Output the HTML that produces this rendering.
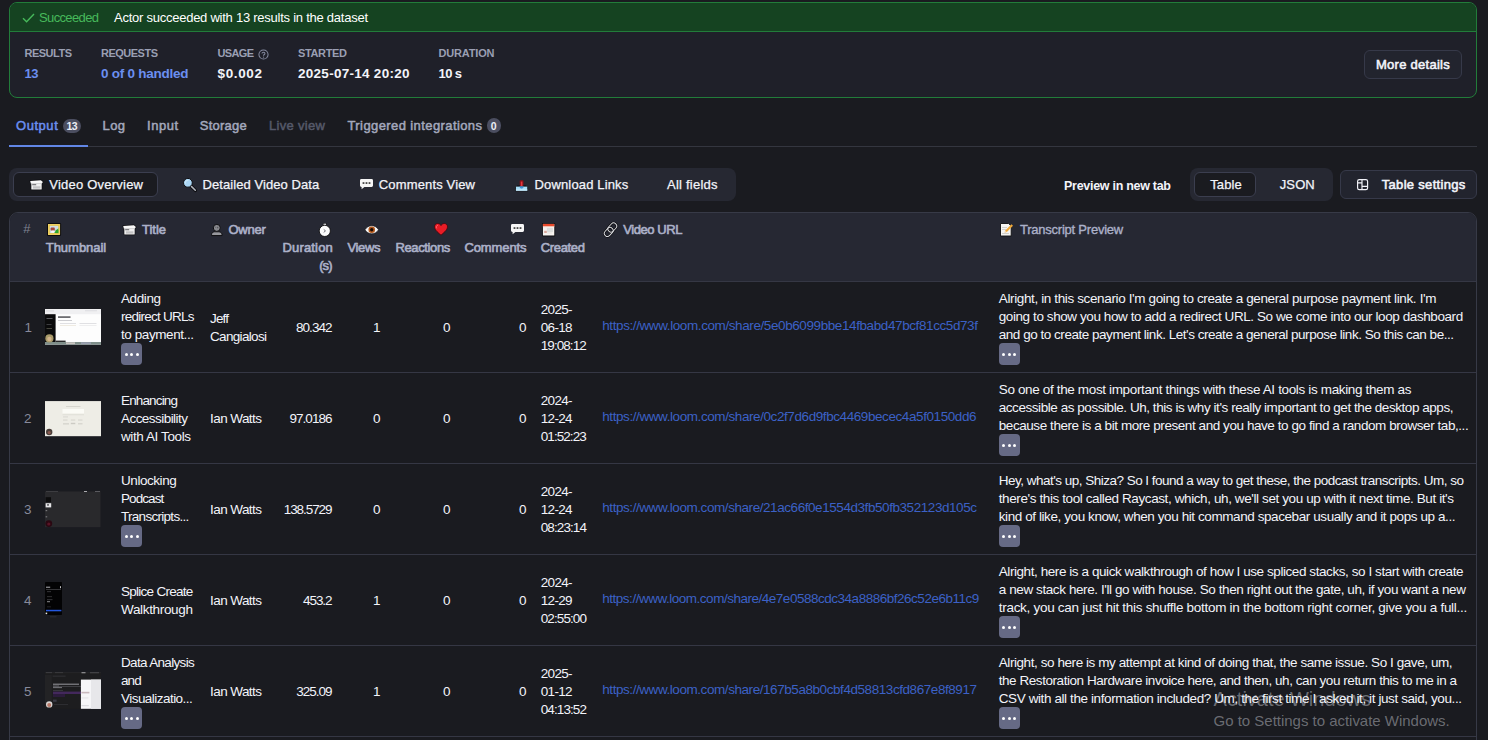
<!DOCTYPE html>
<html lang="en">
<head>
<meta charset="utf-8">
<title>Run output</title>
<style>
*{box-sizing:border-box;margin:0;padding:0}
html,body{width:1488px;height:740px;overflow:hidden;background:#1a1b20;color:#f3f4fa;font-family:"Liberation Sans","DejaVu Sans",sans-serif;font-size:13px}
.t{position:absolute;white-space:nowrap;line-height:normal;z-index:3}
.a{position:absolute}
svg{position:absolute;overflow:visible;z-index:3}
#status{left:9px;top:2px;width:1468px;height:96px;border:1px solid #227c3a;border-radius:8px;background:#1f2029;overflow:hidden}
#status .bar{left:0;top:0;right:0;height:29px;background:#154321;border-bottom:1px solid #227c3a}
.btn{border:1px solid #363949;border-radius:6px;background:#22242e}
.sel{border:1px solid #3b3e4f;border-radius:6px;background:#1a1b20}
.seg{border-radius:8px;background:#262832}
.badge{border-radius:8px;background:#4b4e60}
#table{left:9px;top:212px;width:1468px;height:540px;border:1px solid #373a47;border-radius:9px 9px 0 0;background:#1a1b20;overflow:hidden}
#thead{left:0;top:0;right:0;height:69px;background:#262833;border-bottom:1px solid #353744}
.sep{left:0;right:0;height:1px;background:#353744}
.more{width:21px;height:22px;border-radius:4px;background:#666a85;z-index:3}
.more i{position:absolute;top:9.5px;width:3px;height:3px;border-radius:50%;background:#fff}
.more i:nth-child(1){left:3.5px}.more i:nth-child(2){left:9px}.more i:nth-child(3){left:14.5px}
.thumb{overflow:hidden;z-index:3}
</style>
</head>
<body>
<div class="a" id="status"><div class="a bar"></div></div>
<svg style="left:22px;top:13px" width="13" height="10" viewBox="0 0 13 10"><path d="M1 5.2 L4.6 8.7 L12 1" fill="none" stroke="#47b95b" stroke-width="1.4"/></svg>
<svg style="left:258.2px;top:48.6px" width="11" height="11" viewBox="0 0 12 12"><circle cx="6" cy="6" r="5" fill="none" stroke="#858aa0" stroke-width="1.1"/><path d="M4.4 4.8 C4.4 3.2 7.6 3.2 7.6 4.9 C7.6 6 6 6 6 7.3" fill="none" stroke="#858aa0" stroke-width="1.1"/><circle cx="6" cy="8.8" r=".7" fill="#858aa0"/></svg>
<div class="a btn" style="left:1364px;top:50px;width:98px;height:29px"></div>

<!-- tabs -->
<div class="a badge" style="left:63px;top:119px;width:18px;height:14px"></div>
<div class="a badge" style="left:487px;top:118px;width:14px;height:15px"></div>
<div class="a" style="left:9px;top:145.5px;width:1468px;height:1px;background:#34363f"></div>
<div class="a" style="left:9px;top:144.5px;width:79px;height:2px;background:#6287e6"></div>

<!-- view selector -->
<div class="a seg" style="left:9px;top:168px;width:727px;height:33px"></div>
<div class="a sel" style="left:13px;top:172px;width:145px;height:25px"></div>
<div class="a seg" style="left:1190px;top:168px;width:143px;height:33px"></div>
<div class="a sel" style="left:1194px;top:172px;width:62px;height:25px"></div>
<div class="a btn" style="left:1340px;top:170px;width:137px;height:29px"></div>
<svg style="left:30.3px;top:179.8px" width="13" height="10" viewBox="0 0 13 10"><path d="M0.2 0.9 L10.9 0.2 L12.9 1.9 L11.8 3.7 H0.9 Z" fill="#0d0d10" stroke="#0d0d10" stroke-width="1.3" stroke-linejoin="round"/><rect x="1.3" y="3.4" width="10.4" height="6.1" rx="0.6" fill="#0d0d10" stroke="#0d0d10" stroke-width="1.3"/><path d="M0.2 0.9 L10.9 0.2 L12.9 1.9 L11.8 3.7 H0.9 Z" fill="#f8f8f8"/><rect x="1.3" y="3.4" width="10.4" height="6.1" rx="0.6" fill="#eeeeee"/><rect x="2.2" y="4.3" width="4" height="0.9" fill="#4e4e52"/><rect x="3" y="6.3" width="7.4" height="2.3" fill="#c3c3c5"/></svg>
<svg style="left:182.6px;top:177.5px" width="14" height="14" viewBox="0 0 14 14"><path d="M7.6 7.6 L12.4 12.4" stroke="#0d0d10" stroke-width="3.3" stroke-linecap="round"/><path d="M7.6 7.6 L12.3 12.3" stroke="#b4b8c0" stroke-width="1.5" stroke-linecap="round"/><circle cx="4.9" cy="4.8" r="4.4" fill="#a9d5f4" stroke="#0d0d10" stroke-width="1"/><path d="M2.4 5.6 A2.7 2.7 0 0 1 5.4 2.2" stroke="#d3ecfb" stroke-width="1" fill="none"/></svg>
<svg style="left:359.6px;top:179.2px" width="13" height="10.5" viewBox="0 0 13 10.5"><path d="M1.4 0 H11.6 A1.4 1.4 0 0 1 13 1.4 V6.6 A1.4 1.4 0 0 1 11.6 8 H4.4 L1.6 10.3 V8 H1.4 A1.4 1.4 0 0 1 0 6.6 V1.4 A1.4 1.4 0 0 1 1.4 0 Z" fill="#f6f6f6"/><rect x="2.6" y="3.2" width="1.8" height="1.7" fill="#3a3a3a"/><rect x="5.6" y="3.2" width="1.8" height="1.7" fill="#3a3a3a"/><rect x="8.6" y="3.2" width="1.8" height="1.7" fill="#3a3a3a"/></svg>
<svg style="left:515.2px;top:179.9px" width="13.2" height="11.6" viewBox="0 0 13.2 11.6"><rect x="4.7" y="0.3" width="3.8" height="6.4" rx="0.8" fill="#8c0f18"/><rect x="5.8" y="1.6" width="1.6" height="5" fill="#e23a42"/><path d="M2.4 5.5 H4.9 V6 H8.3 V5.5 H10.8 L13 6.9 V11.3 H0.2 V6.9 Z" fill="#0d0d10"/><rect x="0.9" y="6.6" width="11.4" height="4.1" fill="#a7ddf9"/><rect x="0.9" y="9.4" width="11.4" height="1.3" fill="#c9ecfc"/><path d="M4.5 6.6 H8.7 A2.1 2.1 0 0 1 4.5 6.6 Z" fill="#4696da"/></svg>
<svg style="left:46.7px;top:223px" width="14.1" height="12.9" viewBox="0 0 14.1 12.9"><rect x="0" y="0" width="14.1" height="12.9" rx="1.2" fill="#0d0d10"/><rect x="1" y="1" width="12.1" height="10.9" rx="0.5" fill="#e8c548"/><rect x="1.6" y="1.6" width="10.9" height="9.7" fill="none" stroke="#f3dc7a" stroke-width="0.5"/><rect x="2.8" y="2.8" width="8.5" height="7.3" fill="#cfdde6"/><path d="M11.3 5.2 L11.3 10.1 L7 10.1 Z" fill="#2fa62a"/><rect x="8.6" y="6.8" width="2.7" height="3.3" fill="#2fa62a"/><rect x="3.6" y="4.6" width="4.2" height="3.2" rx="0.8" fill="#a8483a"/><rect x="4.2" y="7.4" width="3.2" height="2.4" rx="0.6" fill="#fafafa"/></svg>
<svg style="left:122.8px;top:224.8px" width="13" height="10" viewBox="0 0 13 10"><path d="M0.2 0.9 L10.9 0.2 L12.9 1.9 L11.8 3.7 H0.9 Z" fill="#0d0d10" stroke="#0d0d10" stroke-width="1.3" stroke-linejoin="round"/><rect x="1.3" y="3.4" width="10.4" height="6.1" rx="0.6" fill="#0d0d10" stroke="#0d0d10" stroke-width="1.3"/><path d="M0.2 0.9 L10.9 0.2 L12.9 1.9 L11.8 3.7 H0.9 Z" fill="#f8f8f8"/><rect x="1.3" y="3.4" width="10.4" height="6.1" rx="0.6" fill="#eeeeee"/><rect x="2.2" y="4.3" width="4" height="0.9" fill="#4e4e52"/><rect x="3" y="6.3" width="7.4" height="2.3" fill="#c3c3c5"/></svg>
<svg style="left:211.4px;top:224px" width="11.6" height="12.2" viewBox="0 0 11.6 12.2"><path d="M0.6 11.6 V10.2 C0.6 8.6 2.4 8 3.6 7.8 H8 C9.2 8 11 8.6 11 10.2 V11.6 Z" fill="#97989d" stroke="#0d0d10" stroke-width="1"/><circle cx="5.8" cy="3.9" r="3.5" fill="#86878c" stroke="#0d0d10" stroke-width="1"/><circle cx="6.6" cy="3.6" r="0.8" fill="#55565c"/><circle cx="4.6" cy="3.3" r="0.6" fill="#6a6b70"/></svg>
<svg style="left:319.1px;top:222.7px" width="11.6" height="13.6" viewBox="0 0 11.6 13.6"><rect x="3.9" y="0" width="3.8" height="3.4" rx="0.7" fill="#0d0d10"/><rect x="4.5" y="0.6" width="2.6" height="2.4" fill="#d9dade"/><circle cx="5.8" cy="7.9" r="5.6" fill="#fbfbfc" stroke="#0d0d10" stroke-width="0.9"/><path d="M4.7 6.4 L6.5 7.9 L4.7 9.4" stroke="#55565e" stroke-width="0.8" fill="none"/></svg>
<svg style="left:364.8px;top:224.8px" width="13.5" height="9.5" viewBox="0 0 13.5 9.5"><path d="M0 4.75 C3 -0.6 10.5 -0.6 13.5 4.75 C10.5 10.1 3 10.1 0 4.75 Z" fill="#f7f7f7" stroke="#0d0d10" stroke-width="0.6"/><circle cx="6.75" cy="4.75" r="3.3" fill="#b4581c"/><circle cx="6.75" cy="4.75" r="1.7" fill="#1a0d06"/></svg>
<svg style="left:434px;top:223.2px" width="14" height="12.6" viewBox="0 0 14 12.6"><path d="M7 12.2 C2.5 8.5 0.5 6.3 0.5 3.8 C0.5 1.7 2 0.5 3.7 0.5 C5.2 0.5 6.4 1.3 7 2.5 C7.6 1.3 8.8 0.5 10.3 0.5 C12 0.5 13.5 1.7 13.5 3.8 C13.5 6.3 11.5 8.5 7 12.2 Z" fill="#e81c26" stroke="#45080e" stroke-width="0.9"/><path d="M3.5 2.3 C2.4 2.7 2 3.8 2.5 5" stroke="#ff6a70" stroke-width="1" fill="none" stroke-linecap="round"/></svg>
<svg style="left:511.3px;top:224.2px" width="13" height="10.5" viewBox="0 0 13 10.5"><path d="M1.4 0 H11.6 A1.4 1.4 0 0 1 13 1.4 V6.6 A1.4 1.4 0 0 1 11.6 8 H4.4 L1.6 10.3 V8 H1.4 A1.4 1.4 0 0 1 0 6.6 V1.4 A1.4 1.4 0 0 1 1.4 0 Z" fill="#f6f6f6"/><rect x="2.6" y="3.2" width="1.8" height="1.7" fill="#3a3a3a"/><rect x="5.6" y="3.2" width="1.8" height="1.7" fill="#3a3a3a"/><rect x="8.6" y="3.2" width="1.8" height="1.7" fill="#3a3a3a"/></svg>
<svg style="left:542.1px;top:223.2px" width="13.2" height="13.4" viewBox="0 0 13.2 13.4"><rect x="0" y="0" width="13.2" height="13.4" rx="0.8" fill="#0d0d10"/><rect x="0.9" y="0.9" width="11.4" height="11.6" fill="#f6f3f0"/><rect x="0.9" y="0.9" width="11.4" height="2.5" fill="#e84a2c"/><rect x="0.9" y="3.4" width="11.4" height="0.7" fill="#f6c8bb"/><rect x="4.9" y="4.9" width="6" height="4.2" fill="#dcdedd"/><rect x="2.2" y="7.8" width="2.6" height="2.2" fill="#d9a79c"/><rect x="5.2" y="9.6" width="4.6" height="0.8" fill="#e2dedb"/></svg>
<svg style="left:604.4px;top:222.9px" width="13" height="13.4" viewBox="0 0 13 13.4"><g fill="none" stroke="#0d0d10" stroke-width="2.4"><rect x="-5" y="-3.1" width="10" height="6.2" rx="3.1" transform="translate(4.75 8.95) rotate(-47)"/><rect x="-5" y="-3.1" width="10" height="6.2" rx="3.1" transform="translate(8.3 4.5) rotate(-47)"/></g><g fill="none" stroke="#dcdde2" stroke-width="0.95"><rect x="-5" y="-3.1" width="10" height="6.2" rx="3.1" transform="translate(4.75 8.95) rotate(-47)"/><rect x="-5" y="-3.1" width="10" height="6.2" rx="3.1" transform="translate(8.3 4.5) rotate(-47)"/></g></svg>
<svg style="left:1000px;top:223px" width="13.5" height="13.5" viewBox="0 0 13.5 13.5"><path d="M0.5 0.5 H8.6 L11.2 3 V13 H0.5 Z" fill="#f5f4f2" stroke="#0d0d10" stroke-width="0.9"/><rect x="2" y="4" width="5" height="0.8" fill="#c9c7c3"/><rect x="2" y="6" width="4" height="0.8" fill="#c9c7c3"/><rect x="2" y="10" width="7" height="0.8" fill="#c9c7c3"/><path d="M4.6 9.6 L5.3 7.4 L11.4 1.2 L13 2.8 L6.8 9 Z" fill="#f0a93a"/><path d="M4.6 9.6 L5.3 7.4 L6.8 9 Z" fill="#f3d9b0"/></svg>
<svg style="left:1357.1px;top:178.7px" width="11.2" height="11.3" viewBox="0 0 11.2 11.3"><g fill="none" stroke="#f3f4fa" stroke-width="1.15"><rect x="0.6" y="0.6" width="10" height="10.1" rx="1.7"/><path d="M5 0.6 V10.7 M0.6 3.9 H5 M5 7.4 H10.6"/></g></svg>

<div class="a" id="table">
  <div class="a" id="thead"></div>
  <div class="a sep" style="top:159px"></div>
  <div class="a sep" style="top:250px"></div>
  <div class="a sep" style="top:341px"></div>
  <div class="a sep" style="top:432px"></div>
  <div class="a sep" style="top:523px"></div>
</div>
<div class="a more" style="left:121px;top:343.0px"><i></i><i></i><i></i></div>
<div class="a more" style="left:998.5px;top:343.0px"><i></i><i></i><i></i></div>
<div class="a more" style="left:998.5px;top:434.0px"><i></i><i></i><i></i></div>
<div class="a more" style="left:121px;top:525.0px"><i></i><i></i><i></i></div>
<div class="a more" style="left:998.5px;top:525.0px"><i></i><i></i><i></i></div>
<div class="a more" style="left:998.5px;top:616.0px"><i></i><i></i><i></i></div>
<div class="a more" style="left:121px;top:707.0px"><i></i><i></i><i></i></div>
<div class="a more" style="left:998.5px;top:707.0px"><i></i><i></i><i></i></div>
<svg style="left:45px;top:309px" width="56" height="35.6" viewBox="0 0 56 35.6"><rect x="0" y="0" width="56" height="35.6" fill="#fdfdfd"/><rect x="0" y="0" width="56" height="5.2" fill="#f0f0f2"/><rect x="1" y="1.6" width="8" height="0.7" fill="#d0d0d4"/><rect x="40" y="1.4" width="12" height="0.8" fill="#d8d8dc"/><rect x="0" y="5.2" width="10.6" height="28" fill="#0b0b0c"/><rect x="13" y="7.2" width="12.5" height="1.8" fill="#6e6e72"/><rect x="13" y="11" width="14" height="0.9" fill="#c8c8cc"/><rect x="15" y="14" width="16" height="0.8" fill="#d9d9dc"/><rect x="34.5" y="14" width="17" height="0.8" fill="#d9d9dc"/><rect x="15" y="16" width="16" height="0.6" fill="#e6e0d0"/><rect x="34.5" y="16" width="17" height="0.6" fill="#e4e4e6"/><rect x="1.5" y="9" width="6" height="1" fill="#5b5b5f"/><rect x="1.5" y="15" width="5" height="0.8" fill="#4a4a4e"/><rect x="1.5" y="19" width="5.5" height="0.8" fill="#55554a"/><rect x="0" y="33" width="56" height="2.6" fill="#7f8f8a"/><rect x="21" y="33.3" width="9" height="1.8" fill="#c9c4c0"/><rect x="36" y="33.3" width="10" height="1.8" fill="#9aa0b0"/><rect x="10.6" y="31.6" width="10" height="1.4" fill="#2a2a2a"/><circle cx="4.4" cy="29.4" r="4.1" fill="#a89a6a"/><circle cx="4.4" cy="30" r="2.2" fill="#d2b48c"/></svg>
<svg style="left:45px;top:400.8px" width="56" height="35.2" viewBox="0 0 56 35.2"><rect x="0" y="0" width="56" height="35.2" fill="#eeede6"/><rect x="0" y="0" width="56" height="0.8" fill="#d9d8d2"/><rect x="17.5" y="8" width="21.5" height="4.4" fill="#fbfbf6"/><rect x="21" y="5" width="14.5" height="1" fill="#d6d5ce"/><rect x="17.5" y="13.4" width="21.5" height="0.8" fill="#dddcd5"/><rect x="18" y="15.6" width="5" height="0.7" fill="#cfcec8"/><rect x="18" y="18.6" width="4.5" height="0.9" fill="#d2d1ca"/><rect x="25.8" y="18.6" width="4.5" height="0.9" fill="#d2d1ca"/><rect x="33" y="18.6" width="4.5" height="0.9" fill="#d2d1ca"/><rect x="18" y="22.4" width="6" height="1" fill="#cccbc4"/><rect x="25.8" y="21.8" width="4.5" height="1.4" fill="#cccbc4"/><rect x="33" y="22.4" width="4.5" height="0.9" fill="#cccbc4"/><circle cx="4.2" cy="31" r="3.2" fill="#4a3f3a"/><circle cx="4.2" cy="31.6" r="1.6" fill="#8a5a50"/></svg>
<svg style="left:45px;top:490.8px" width="55.5" height="36.2" viewBox="0 0 55.5 36.2"><rect x="0" y="0" width="55.5" height="36.2" fill="#29292c"/><rect x="0" y="0" width="55.5" height="1" fill="#222226"/><rect x="39" y="0.2" width="3" height="0.8" fill="#cfcfd2"/><rect x="50" y="0.2" width="5" height="0.8" fill="#6a6a6e"/><rect x="1" y="0.2" width="12" height="0.7" fill="#4a4a4e"/><rect x="0.6" y="6.2" width="5.4" height="5" fill="#0c0c0d"/><rect x="0.6" y="12.2" width="5.6" height="4.2" fill="#e6e6e8"/><rect x="2.2" y="13" width="1.6" height="1.8" fill="#55555a"/><rect x="0.6" y="19" width="1.6" height="1.2" fill="#77777a"/><rect x="0.6" y="25.2" width="1.6" height="1.2" fill="#77777a"/><circle cx="3.8" cy="32.6" r="3.4" fill="#2a0812"/><circle cx="3.8" cy="33" r="1.6" fill="#5a1426"/></svg>
<svg style="left:45px;top:582px" width="17" height="35.5" viewBox="0 0 17 35.5"><rect x="0" y="0" width="17" height="33" fill="#030304" rx="0.8"/><rect x="1" y="4.6" width="4.2" height="1.3" fill="#8a8a8e"/><rect x="15" y="4.2" width="0.9" height="2" fill="#d8d8da"/><rect x="1" y="7.4" width="15" height="0.6" fill="#55555a"/><rect x="2" y="9.4" width="4" height="0.7" fill="#4a4a4e"/><rect x="2" y="14.4" width="5" height="0.7" fill="#444448"/><rect x="2" y="17.4" width="5.5" height="0.7" fill="#4a4a4e"/><rect x="2" y="19.2" width="3" height="1" fill="#8a8a8e"/><rect x="2" y="24.6" width="4" height="0.6" fill="#3a3a3e"/><rect x="1" y="27.8" width="15.4" height="1.5" fill="#2357df"/><rect x="0.6" y="30.6" width="1.6" height="1.6" fill="#e8e8e0"/><rect x="5" y="34.6" width="6.5" height="0.6" fill="#3a3a40"/></svg>
<svg style="left:45px;top:672.4px" width="56" height="36.8" viewBox="0 0 56 36.8"><rect x="0" y="0" width="56" height="36.8" fill="#1d1d1f"/><rect x="0" y="0" width="56" height="1.2" fill="#242427"/><rect x="36.5" y="0.4" width="4" height="0.8" fill="#c9c9cc"/><rect x="45" y="0.4" width="9" height="0.8" fill="#55555a"/><rect x="1" y="0.4" width="6" height="0.7" fill="#4a4a4e"/><rect x="10" y="0.4" width="8" height="0.7" fill="#444448"/><rect x="0" y="3" width="6.8" height="30" fill="#232325"/><rect x="7.6" y="3.4" width="13" height="1.6" fill="#2a2a2d"/><rect x="8" y="11.6" width="26" height="1.3" fill="#7c7c80"/><rect x="8" y="13.6" width="6" height="1" fill="#74747a"/><rect x="8" y="15.2" width="9" height="0.9" fill="#808086"/><rect x="14" y="14.4" width="22" height="0.6" fill="#55555a"/><rect x="8" y="18.2" width="10" height="0.6" fill="#4a4a50"/><rect x="8" y="19.6" width="28" height="2.4" fill="#43285c"/><rect x="8" y="22" width="12" height="3" fill="#2c1c3c"/><rect x="8" y="27.6" width="3.6" height="2.2" fill="#3a3a44"/><rect x="9" y="32" width="14" height="0.6" fill="#3a3a3e"/><rect x="35.9" y="7.6" width="20.1" height="29.2" fill="#f6f6f8"/><rect x="46" y="7.6" width="10" height="29.2" fill="#e7e7ea"/><rect x="36.4" y="19.8" width="8" height="1.6" fill="#c9b9bd"/><rect x="36.4" y="25.6" width="7" height="0.7" fill="#d9d9dc"/><rect x="36.4" y="33" width="7.4" height="1.2" fill="#dcdce0"/><circle cx="4.2" cy="32.4" r="3.2" fill="#d9d4d2"/><circle cx="4.2" cy="33" r="2" fill="#b87868"/></svg>
<div class="t" style="top:10.00px;font-size:13px;color:#47b95b;letter-spacing:-0.633px;left:39px;">Succeeded</div>
<div class="t" style="top:10.00px;font-size:13px;color:#ffffff;letter-spacing:-0.249px;left:114px;">Actor succeeded with 13 results in the dataset</div>
<div class="t" style="top:47.00px;font-size:11px;color:#9a9fb3;font-weight:bold;letter-spacing:-0.505px;left:24.5px;">RESULTS</div>
<div class="t" style="top:66.00px;font-size:13px;color:#6b8ff0;font-weight:bold;left:24.5px;word-spacing:-0.6px;letter-spacing:-0.4px;">13</div>
<div class="t" style="top:47.00px;font-size:11px;color:#9a9fb3;font-weight:bold;letter-spacing:-0.502px;left:101px;">REQUESTS</div>
<div class="t" style="top:66.00px;font-size:13.5px;color:#6b8ff0;font-weight:bold;letter-spacing:-0.251px;left:101px;">0 of 0 handled</div>
<div class="t" style="top:47.00px;font-size:11px;color:#9a9fb3;font-weight:bold;letter-spacing:-0.656px;left:217.5px;">USAGE</div>
<div class="t" style="top:66.00px;font-size:13.5px;color:#f3f4fa;font-weight:bold;letter-spacing:0.641px;left:217.5px;">$0.002</div>
<div class="t" style="top:47.00px;font-size:11px;color:#9a9fb3;font-weight:bold;letter-spacing:-0.357px;left:298px;">STARTED</div>
<div class="t" style="top:66.00px;font-size:13.5px;color:#f3f4fa;font-weight:bold;letter-spacing:0.277px;left:298px;">2025-07-14 20:20</div>
<div class="t" style="top:47.00px;font-size:11px;color:#9a9fb3;font-weight:bold;letter-spacing:-0.176px;left:438.5px;">DURATION</div>
<div class="t" style="top:66.00px;font-size:13px;color:#f3f4fa;font-weight:bold;left:438.5px;word-spacing:-0.6px;letter-spacing:-0.4px;">10 s</div>
<div class="t" style="top:57.00px;font-size:13px;color:#f3f4fa;letter-spacing:0.267px;-webkit-text-stroke:0.55px #f3f4fa;left:1376px;">More details</div>
<div class="t" style="top:118.00px;font-size:13px;color:#6b8ff0;letter-spacing:0.544px;-webkit-text-stroke:0.5px #6b8ff0;left:16px;">Output</div>
<div class="t" style="top:120.00px;font-size:10.5px;color:#eceef6;font-weight:bold;letter-spacing:-0.688px;left:66.5px;">13</div>
<div class="t" style="top:118.00px;font-size:13px;color:#a3a8bc;letter-spacing:0.398px;-webkit-text-stroke:0.5px #a3a8bc;left:102.5px;">Log</div>
<div class="t" style="top:118.00px;font-size:13px;color:#a3a8bc;letter-spacing:0.520px;-webkit-text-stroke:0.5px #a3a8bc;left:147px;">Input</div>
<div class="t" style="top:118.00px;font-size:13px;color:#a3a8bc;letter-spacing:0.242px;-webkit-text-stroke:0.5px #a3a8bc;left:199.75px;">Storage</div>
<div class="t" style="top:118.00px;font-size:13px;color:#555969;letter-spacing:0.316px;-webkit-text-stroke:0.5px #555969;left:269px;">Live view</div>
<div class="t" style="top:118.00px;font-size:13px;color:#a3a8bc;letter-spacing:0.406px;-webkit-text-stroke:0.5px #a3a8bc;left:347.5px;">Triggered integrations</div>
<div class="t" style="top:120.00px;font-size:10.5px;color:#eceef6;font-weight:bold;letter-spacing:0.556px;left:490.8px;">0</div>
<div class="t" style="top:177.25px;font-size:13px;color:#f3f4fa;letter-spacing:0.226px;-webkit-text-stroke:0.25px #f3f4fa;left:49.25px;">Video Overview</div>
<div class="t" style="top:177.25px;font-size:13px;color:#f3f4fa;letter-spacing:0.075px;-webkit-text-stroke:0.25px #f3f4fa;left:202.5px;">Detailed Video Data</div>
<div class="t" style="top:177.25px;font-size:13px;color:#f3f4fa;letter-spacing:0.154px;-webkit-text-stroke:0.25px #f3f4fa;left:378.75px;">Comments View</div>
<div class="t" style="top:177.25px;font-size:13px;color:#f3f4fa;letter-spacing:0.151px;-webkit-text-stroke:0.25px #f3f4fa;left:534.5px;">Download Links</div>
<div class="t" style="top:177.25px;font-size:13px;color:#f3f4fa;letter-spacing:0.231px;-webkit-text-stroke:0.25px #f3f4fa;left:667px;">All fields</div>
<div class="t" style="top:179.00px;font-size:12.5px;color:#f3f4fa;font-weight:bold;letter-spacing:-0.285px;left:1064px;">Preview in new tab</div>
<div class="t" style="top:177.25px;font-size:13px;color:#f3f4fa;letter-spacing:0.105px;-webkit-text-stroke:0.25px #f3f4fa;left:1210.25px;">Table</div>
<div class="t" style="top:177.25px;font-size:13px;color:#f3f4fa;letter-spacing:0.109px;-webkit-text-stroke:0.25px #f3f4fa;left:1279.75px;">JSON</div>
<div class="t" style="top:177.25px;font-size:13px;color:#f3f4fa;letter-spacing:0.308px;-webkit-text-stroke:0.55px #f3f4fa;left:1381.75px;">Table settings</div>
<div class="t" style="top:221.00px;font-size:13px;color:#7f8290;left:23.25px;">#</div>
<div class="t" style="top:240.00px;font-size:13px;color:#acb1c9;letter-spacing:-0.025px;-webkit-text-stroke:0.62px #acb1c9;left:45.75px;">Thumbnail</div>
<div class="t" style="top:222.00px;font-size:13px;color:#acb1c9;letter-spacing:-0.020px;-webkit-text-stroke:0.62px #acb1c9;left:142px;">Title</div>
<div class="t" style="top:222.00px;font-size:13px;color:#acb1c9;letter-spacing:-0.262px;-webkit-text-stroke:0.62px #acb1c9;left:228.5px;">Owner</div>
<div class="t" style="top:240.00px;font-size:13px;color:#acb1c9;letter-spacing:0.158px;-webkit-text-stroke:0.62px #acb1c9;left:282.5px;">Duration</div>
<div class="t" style="top:258.00px;font-size:13px;color:#acb1c9;letter-spacing:-0.961px;-webkit-text-stroke:0.62px #acb1c9;left:319.25px;">(s)</div>
<div class="t" style="top:240.00px;font-size:13px;color:#acb1c9;letter-spacing:-0.363px;-webkit-text-stroke:0.62px #acb1c9;left:347.5px;">Views</div>
<div class="t" style="top:240.00px;font-size:13px;color:#acb1c9;letter-spacing:-0.383px;-webkit-text-stroke:0.62px #acb1c9;left:395.5px;">Reactions</div>
<div class="t" style="top:240.00px;font-size:13px;color:#acb1c9;letter-spacing:-0.123px;-webkit-text-stroke:0.62px #acb1c9;left:464.5px;">Comments</div>
<div class="t" style="top:240.00px;font-size:13px;color:#acb1c9;letter-spacing:-0.333px;-webkit-text-stroke:0.62px #acb1c9;left:540.75px;">Created</div>
<div class="t" style="top:222.00px;font-size:13px;color:#acb1c9;letter-spacing:-0.424px;-webkit-text-stroke:0.62px #acb1c9;left:623.25px;">Video URL</div>
<div class="t" style="top:222.00px;font-size:13px;color:#acb1c9;letter-spacing:-0.233px;-webkit-text-stroke:0.35px #acb1c9;left:1020px;">Transcript Preview</div>
<div class="t" style="top:320.00px;font-size:13.5px;color:#878a9b;letter-spacing:-2.516px;left:24.5px;">1</div>
<div class="t" style="top:291.00px;font-size:13.5px;color:#f3f4fa;letter-spacing:-0.409px;left:121px;">Adding</div>
<div class="t" style="top:309.00px;font-size:13.5px;color:#f3f4fa;letter-spacing:-0.753px;left:121px;">redirect URLs</div>
<div class="t" style="top:327.00px;font-size:13.5px;color:#f3f4fa;letter-spacing:-0.421px;left:121px;">to payment...</div>
<div class="t" style="top:311.00px;font-size:13.5px;color:#f3f4fa;letter-spacing:-0.839px;left:210px;">Jeff</div>
<div class="t" style="top:329.00px;font-size:13.5px;color:#f3f4fa;letter-spacing:-0.672px;left:210px;">Cangialosi</div>
<div class="t" style="top:320.00px;font-size:13.5px;color:#f3f4fa;letter-spacing:-0.959px;right:1156.46px;">80.342</div>
<div class="t" style="top:320.00px;font-size:13.5px;color:#f3f4fa;letter-spacing:-1.516px;right:1109.02px;">1</div>
<div class="t" style="top:320.00px;font-size:13.5px;color:#f3f4fa;letter-spacing:-0.016px;right:1037.52px;">0</div>
<div class="t" style="top:320.00px;font-size:13.5px;color:#f3f4fa;letter-spacing:-0.516px;right:962.02px;">0</div>
<div class="t" style="top:302.00px;font-size:13.5px;color:#f3f4fa;letter-spacing:-0.695px;left:540.75px;">2025-</div>
<div class="t" style="top:320.00px;font-size:13.5px;color:#f3f4fa;letter-spacing:-0.695px;left:540.75px;">06-18</div>
<div class="t" style="top:338.00px;font-size:13.5px;color:#f3f4fa;letter-spacing:-0.938px;left:540.75px;">19:08:12</div>
<div class="t" style="top:318.00px;font-size:13.5px;color:#3c61c6;letter-spacing:-0.406px;left:602.25px;">https://www.loom.com/share/5e0b6099bbe14fbabd47bcf81cc5d73f</div>
<div class="t" style="top:291.00px;font-size:13.5px;color:#f3f4fa;letter-spacing:-0.371px;left:998.75px;">Alright, in this scenario I'm going to create a general purpose payment link. I'm</div>
<div class="t" style="top:309.00px;font-size:13.5px;color:#f3f4fa;letter-spacing:-0.415px;left:998.75px;">going to show you how to add a redirect URL. So we come into our loop dashboard</div>
<div class="t" style="top:327.00px;font-size:13.5px;color:#f3f4fa;letter-spacing:-0.472px;left:998.75px;">and go to create payment link. Let's create a general purpose link. So this can be...</div>
<div class="t" style="top:411.00px;font-size:13.5px;color:#878a9b;letter-spacing:-0.516px;left:24px;">2</div>
<div class="t" style="top:393.00px;font-size:13.5px;color:#f3f4fa;letter-spacing:-0.852px;left:121px;">Enhancing</div>
<div class="t" style="top:411.00px;font-size:13.5px;color:#f3f4fa;letter-spacing:-0.544px;left:121px;">Accessibility</div>
<div class="t" style="top:429.00px;font-size:13.5px;color:#f3f4fa;letter-spacing:-0.400px;left:121px;">with AI Tools</div>
<div class="t" style="top:411.00px;font-size:13.5px;color:#f3f4fa;letter-spacing:-0.566px;left:210px;">Ian Watts</div>
<div class="t" style="top:411.00px;font-size:13.5px;color:#f3f4fa;letter-spacing:-0.969px;right:1156.47px;">97.0186</div>
<div class="t" style="top:411.00px;font-size:13.5px;color:#f3f4fa;letter-spacing:-0.766px;right:1108.27px;">0</div>
<div class="t" style="top:411.00px;font-size:13.5px;color:#f3f4fa;letter-spacing:-0.016px;right:1037.52px;">0</div>
<div class="t" style="top:411.00px;font-size:13.5px;color:#f3f4fa;letter-spacing:-0.516px;right:962.02px;">0</div>
<div class="t" style="top:393.00px;font-size:13.5px;color:#f3f4fa;letter-spacing:-0.695px;left:540.75px;">2024-</div>
<div class="t" style="top:411.00px;font-size:13.5px;color:#f3f4fa;letter-spacing:-0.695px;left:540.75px;">12-24</div>
<div class="t" style="top:429.00px;font-size:13.5px;color:#f3f4fa;letter-spacing:-0.938px;left:540.75px;">01:52:23</div>
<div class="t" style="top:409.00px;font-size:13.5px;color:#3c61c6;letter-spacing:-0.418px;left:602.25px;">https://www.loom.com/share/0c2f7d6d9fbc4469becec4a5f0150dd6</div>
<div class="t" style="top:382.00px;font-size:13.5px;color:#f3f4fa;letter-spacing:-0.355px;left:998.75px;">So one of the most important things with these AI tools is making them as</div>
<div class="t" style="top:400.00px;font-size:13.5px;color:#f3f4fa;letter-spacing:-0.445px;left:998.75px;">accessible as possible. Uh, this is why it's really important to get the desktop apps,</div>
<div class="t" style="top:418.00px;font-size:13.5px;color:#f3f4fa;letter-spacing:-0.432px;left:998.75px;">because there is a bit more present and you have to go find a random browser tab,...</div>
<div class="t" style="top:502.00px;font-size:13.5px;color:#878a9b;letter-spacing:-0.516px;left:24px;">3</div>
<div class="t" style="top:473.00px;font-size:13.5px;color:#f3f4fa;letter-spacing:-0.441px;left:121px;">Unlocking</div>
<div class="t" style="top:491.00px;font-size:13.5px;color:#f3f4fa;letter-spacing:-0.922px;left:121px;">Podcast</div>
<div class="t" style="top:509.00px;font-size:13.5px;color:#f3f4fa;letter-spacing:-0.713px;left:121px;">Transcripts...</div>
<div class="t" style="top:502.00px;font-size:13.5px;color:#f3f4fa;letter-spacing:-0.566px;left:210px;">Ian Watts</div>
<div class="t" style="top:502.00px;font-size:13.5px;color:#f3f4fa;letter-spacing:-1.080px;right:1156.58px;">138.5729</div>
<div class="t" style="top:502.00px;font-size:13.5px;color:#f3f4fa;letter-spacing:-0.766px;right:1108.27px;">0</div>
<div class="t" style="top:502.00px;font-size:13.5px;color:#f3f4fa;letter-spacing:-0.016px;right:1037.52px;">0</div>
<div class="t" style="top:502.00px;font-size:13.5px;color:#f3f4fa;letter-spacing:-0.516px;right:962.02px;">0</div>
<div class="t" style="top:484.00px;font-size:13.5px;color:#f3f4fa;letter-spacing:-0.695px;left:540.75px;">2024-</div>
<div class="t" style="top:502.00px;font-size:13.5px;color:#f3f4fa;letter-spacing:-0.695px;left:540.75px;">12-24</div>
<div class="t" style="top:520.00px;font-size:13.5px;color:#f3f4fa;letter-spacing:-0.902px;left:540.75px;">08:23:14</div>
<div class="t" style="top:500.00px;font-size:13.5px;color:#3c61c6;letter-spacing:-0.436px;left:602.25px;">https://www.loom.com/share/21ac66f0e1554d3fb50fb352123d105c</div>
<div class="t" style="top:473.00px;font-size:13.5px;color:#f3f4fa;letter-spacing:-0.511px;left:998.75px;">Hey, what's up, Shiza? So I found a way to get these, the podcast transcripts. Um, so</div>
<div class="t" style="top:491.00px;font-size:13.5px;color:#f3f4fa;letter-spacing:-0.397px;left:998.75px;">there's this tool called Raycast, which, uh, we'll set you up with it next time. But it's</div>
<div class="t" style="top:509.00px;font-size:13.5px;color:#f3f4fa;letter-spacing:-0.416px;left:998.75px;">kind of like, you know, when you hit command spacebar usually and it pops up a...</div>
<div class="t" style="top:593.00px;font-size:13.5px;color:#878a9b;letter-spacing:-0.516px;left:24px;">4</div>
<div class="t" style="top:584.00px;font-size:13.5px;color:#f3f4fa;letter-spacing:-0.733px;left:121px;">Splice Create</div>
<div class="t" style="top:602.00px;font-size:13.5px;color:#f3f4fa;letter-spacing:-0.330px;left:121px;">Walkthrough</div>
<div class="t" style="top:593.00px;font-size:13.5px;color:#f3f4fa;letter-spacing:-0.566px;left:210px;">Ian Watts</div>
<div class="t" style="top:593.00px;font-size:13.5px;color:#f3f4fa;letter-spacing:-1.074px;right:1156.57px;">453.2</div>
<div class="t" style="top:593.00px;font-size:13.5px;color:#f3f4fa;letter-spacing:-1.516px;right:1109.02px;">1</div>
<div class="t" style="top:593.00px;font-size:13.5px;color:#f3f4fa;letter-spacing:-0.016px;right:1037.52px;">0</div>
<div class="t" style="top:593.00px;font-size:13.5px;color:#f3f4fa;letter-spacing:-0.516px;right:962.02px;">0</div>
<div class="t" style="top:575.00px;font-size:13.5px;color:#f3f4fa;letter-spacing:-0.695px;left:540.75px;">2024-</div>
<div class="t" style="top:593.00px;font-size:13.5px;color:#f3f4fa;letter-spacing:-0.695px;left:540.75px;">12-29</div>
<div class="t" style="top:611.00px;font-size:13.5px;color:#f3f4fa;letter-spacing:-0.902px;left:540.75px;">02:55:00</div>
<div class="t" style="top:591.00px;font-size:13.5px;color:#3c61c6;letter-spacing:-0.482px;left:602.25px;">https://www.loom.com/share/4e7e0588cdc34a8886bf26c52e6b11c9</div>
<div class="t" style="top:564.00px;font-size:13.5px;color:#f3f4fa;letter-spacing:-0.428px;left:998.75px;">Alright, here is a quick walkthrough of how I use spliced stacks, so I start with create</div>
<div class="t" style="top:582.00px;font-size:13.5px;color:#f3f4fa;letter-spacing:-0.409px;left:998.75px;">a new stack here. I'll go with house. So then right out the gate, uh, if you want a new</div>
<div class="t" style="top:600.00px;font-size:13.5px;color:#f3f4fa;letter-spacing:-0.290px;left:998.75px;">track, you can just hit this shuffle bottom in the bottom right corner, give you a full...</div>
<div class="t" style="top:684.00px;font-size:13.5px;color:#878a9b;letter-spacing:-0.516px;left:24px;">5</div>
<div class="t" style="top:655.00px;font-size:13.5px;color:#f3f4fa;letter-spacing:-0.671px;left:121px;">Data Analysis</div>
<div class="t" style="top:673.00px;font-size:13.5px;color:#f3f4fa;letter-spacing:-0.891px;left:121px;">and</div>
<div class="t" style="top:691.00px;font-size:13.5px;color:#f3f4fa;letter-spacing:-0.539px;left:121px;">Visualizatio...</div>
<div class="t" style="top:684.00px;font-size:13.5px;color:#f3f4fa;letter-spacing:-0.566px;left:210px;">Ian Watts</div>
<div class="t" style="top:684.00px;font-size:13.5px;color:#f3f4fa;letter-spacing:-1.009px;right:1156.51px;">325.09</div>
<div class="t" style="top:684.00px;font-size:13.5px;color:#f3f4fa;letter-spacing:-1.516px;right:1109.02px;">1</div>
<div class="t" style="top:684.00px;font-size:13.5px;color:#f3f4fa;letter-spacing:-0.016px;right:1037.52px;">0</div>
<div class="t" style="top:684.00px;font-size:13.5px;color:#f3f4fa;letter-spacing:-0.516px;right:962.02px;">0</div>
<div class="t" style="top:666.00px;font-size:13.5px;color:#f3f4fa;letter-spacing:-0.695px;left:540.75px;">2025-</div>
<div class="t" style="top:684.00px;font-size:13.5px;color:#f3f4fa;letter-spacing:-0.695px;left:540.75px;">01-12</div>
<div class="t" style="top:702.00px;font-size:13.5px;color:#f3f4fa;letter-spacing:-0.902px;left:540.75px;">04:13:52</div>
<div class="t" style="top:682.00px;font-size:13.5px;color:#3c61c6;letter-spacing:-0.436px;left:602.25px;">https://www.loom.com/share/167b5a8b0cbf4d58813cfd867e8f8917</div>
<div class="t" style="top:655.00px;font-size:13.5px;color:#f3f4fa;letter-spacing:-0.427px;left:998.75px;">Alright, so here is my attempt at kind of doing that, the same issue. So I gave, um,</div>
<div class="t" style="top:673.00px;font-size:13.5px;color:#f3f4fa;letter-spacing:-0.442px;left:998.75px;">the Restoration Hardware invoice here, and then, uh, can you return this to me in a</div>
<div class="t" style="top:691.00px;font-size:13.5px;color:#f3f4fa;letter-spacing:-0.401px;left:998.75px;">CSV with all the information included? Um, the first time I asked it, it just said, you...</div>
<div class="t" style="top:688.40px;font-size:20px;color:rgba(200,202,210,.47);letter-spacing:-0.030px;left:1213.6px;z-index:2;">Activate Windows</div>
<div class="t" style="top:712.00px;font-size:15px;color:rgba(200,202,210,.47);letter-spacing:-0.020px;left:1213.6px;z-index:2;">Go to Settings to activate Windows.</div>
</body>
</html>
